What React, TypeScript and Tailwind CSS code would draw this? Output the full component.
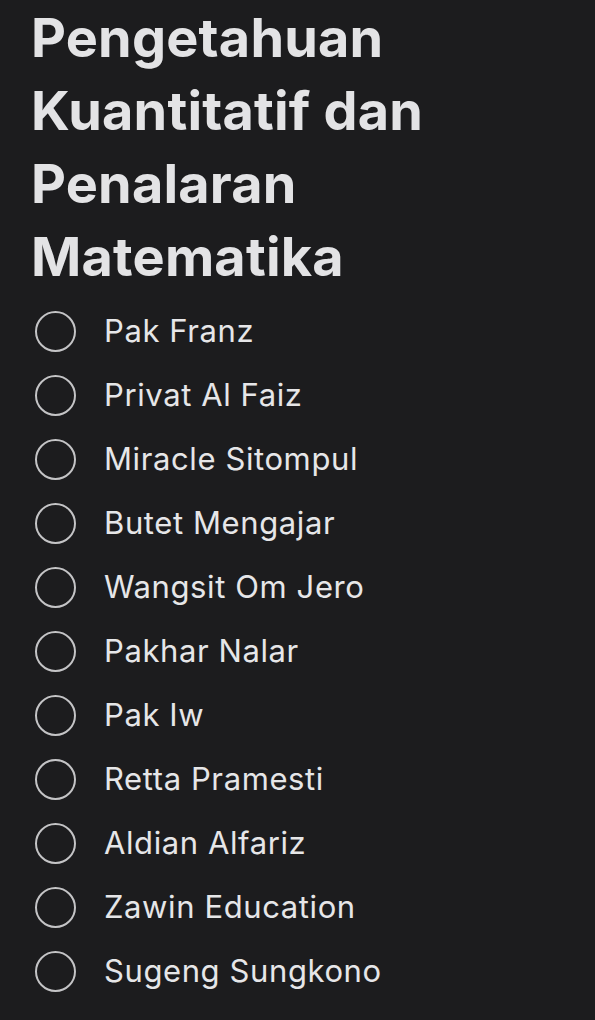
import React from "react";

const items = [
  "Pak Franz",
  "Privat Al Faiz",
  "Miracle Sitompul",
  "Butet Mengajar",
  "Wangsit Om Jero",
  "Pakhar Nalar",
  "Pak Iw",
  "Retta Pramesti",
  "Aldian Alfariz",
  "Zawin Education",
  "Sugeng Sungkono",
];

export default function App() {
  return (
    <div className="w-[595px] h-[1020px] bg-[#1c1c1e] overflow-hidden" style={{ fontFamily: "Inter, 'Noto Sans', sans-serif" }}>
      <h1 className="pl-[31px] pt-[1px] text-[54px] leading-[73px] font-bold text-[#e3e3e5] tracking-[0.2px]">
        Pengetahuan
        <br />
        Kuantitatif dan
        <br />
        Penalaran
        <br />
        Matematika
      </h1>
      <ul className="mt-[6px] flex flex-col">
        {items.map((t) => (
          <li key={t} className="flex items-center h-[64px] pl-[35px]">
            <span className="w-[41px] h-[41px] rounded-full border-2 border-[#c4c4c6] shrink-0" />
            <span className="ml-[28px] text-[31px] text-[#e6e6e8] tracking-[0.6px]">{t}</span>
          </li>
        ))}
      </ul>
    </div>
  );
}
